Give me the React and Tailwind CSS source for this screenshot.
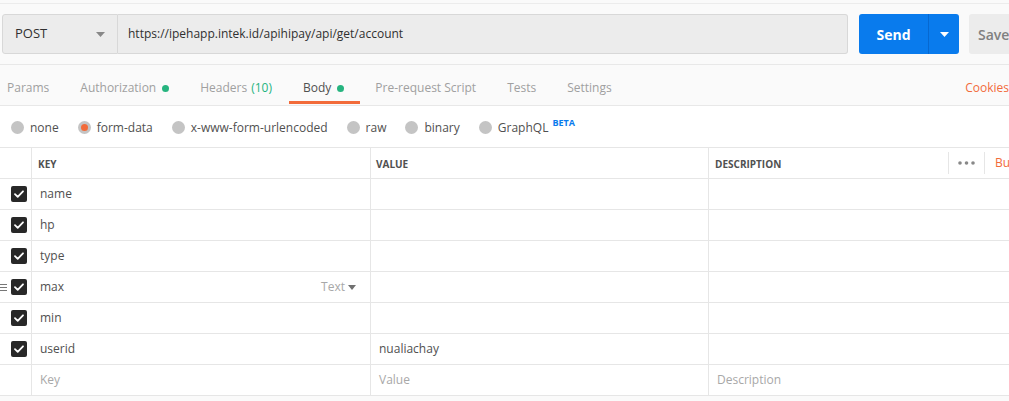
import React from 'react';

const tabs = [
  { label: 'Params' },
  { label: 'Authorization', dot: true },
  { label: 'Headers', count: '(10)' },
  { label: 'Body', dot: true, active: true },
  { label: 'Pre-request Script' },
  { label: 'Tests' },
  { label: 'Settings' },
];

const bodyTypes = ['none', 'form-data', 'x-www-form-urlencoded', 'raw', 'binary', 'GraphQL'];

const rows = [
  { key: 'name' },
  { key: 'hp' },
  { key: 'type' },
  { key: 'max', hover: true },
  { key: 'min' },
  { key: 'userid', value: 'nualiachay' },
];

function Check() {
  return (
    <span className="flex h-4 w-4 items-center justify-center rounded-[2px] bg-[#282828]">
      <svg width="10" height="8" viewBox="0 0 10 8" fill="none">
        <path d="M1 4.2 3.7 6.8 9 1.3" stroke="#fff" strokeWidth="1.8" strokeLinecap="round" strokeLinejoin="round" />
      </svg>
    </span>
  );
}

export default function App() {
  return (
    <div
      className="h-[401px] w-[1009px] overflow-hidden bg-[#fafafa] text-[12px] text-[#505050]"
      style={{ fontFamily: '"Open Sans", "Liberation Sans", sans-serif' }}
    >
      {/* request bar */}
      <div className="mt-[3px] border-t border-[#ececec] pb-[10px] pt-[10px]">
        <div className="flex h-[40px] items-stretch overflow-hidden pl-[2px]">
          <div className="flex w-[116px] shrink-0 items-center justify-between rounded-l-[3px] border border-[#d8d8d8] bg-[#ececec] pl-[12px] pr-[12px] text-[13px] text-[#303030]">
            <span>POST</span>
            <svg width="9" height="5" viewBox="0 0 9 5"><path d="M0 0h9L4.5 5z" fill="#888" /></svg>
          </div>
          <div className="flex w-[730px] shrink-0 items-center rounded-r-[3px] border border-l-0 border-[#d8d8d8] bg-[#ececec] pl-[10px] text-[12px] text-[#303030]">
            https://ipehapp.intek.id/apihipay/api/get/account
          </div>
          <div className="ml-[11px] flex w-[100px] shrink-0 overflow-hidden rounded-[3px] bg-[#097bed] text-white">
            <div className="flex w-[69px] items-center justify-center text-[14px] font-bold">Send</div>
            <div className="flex flex-1 items-center justify-center border-l border-[#0668d0]">
              <svg width="9" height="5" viewBox="0 0 9 5"><path d="M0 0h9L4.5 5z" fill="#fff" /></svg>
            </div>
          </div>
          <div className="ml-[10px] flex w-[60px] shrink-0 items-center rounded-[3px] bg-[#ececec] pl-[9px] text-[14px] font-semibold text-[#808080]">
            Save
          </div>
        </div>
      </div>

      {/* tabs */}
      <div className="flex h-[42px] items-stretch border-y border-[#e8e8e8] pl-[7px] pt-[6px]">
        {tabs.map((t) => (
          <div key={t.label} className={`relative mr-[31px] flex items-center ${t.active ? 'text-[#505050]' : 'text-[#a0a0a0]'}`}>
            <span>{t.label}</span>
            {t.count && <span className="ml-[4px] text-[#26b47f]">{t.count}</span>}
            {t.dot && <span className="ml-[6px] h-[7px] w-[7px] rounded-full bg-[#26b47f]" />}
            {t.active && <span className="absolute bottom-[1px] left-[-14px] right-[-16px] h-[3px] bg-[#f26b3a]" />}
          </div>
        ))}
        <div className="ml-auto flex items-center text-[#f26b3a]">Cookies</div>
      </div>

      {/* body type radios */}
      <div className="flex h-[41px] items-center bg-white pl-[11px] pt-[2px]">
        {bodyTypes.map((b) => (
          <div key={b} className="mr-[19px] flex items-center">
            <span className="flex h-[13px] w-[13px] items-center justify-center rounded-full bg-[#c4c4c4]">
              {b === 'form-data' && <span className="h-[7px] w-[7px] rounded-full bg-[#f26b3a]" />}
            </span>
            <span className="ml-[6px]">{b}</span>
            {b === 'GraphQL' && <span className="-mt-[9px] ml-[4px] text-[9px] font-bold text-[#097bed]">BETA</span>}
          </div>
        ))}
      </div>

      {/* table */}
      <div className="border-t border-[#e6e6e6] bg-white">
        <div className="flex h-[31px] border-b border-[#e6e6e6] text-[10px] font-bold text-[#505050]">
          <div className="w-[32px] border-r border-[#e6e6e6]" />
          <div className="flex w-[339px] items-center border-r border-[#e6e6e6] pl-[6px] pt-[2px]">KEY</div>
          <div className="flex w-[338px] items-center border-r border-[#e6e6e6] pl-[5px] pt-[2px]">VALUE</div>
          <div className="flex flex-1 items-center pl-[6px]">
            <span className="pt-[2px]">DESCRIPTION</span>
            <span className="ml-auto flex h-[22px] items-center border-x border-[#e6e6e6] px-[9px]">
              <svg width="17" height="4" viewBox="0 0 17 4">
                <circle cx="2" cy="2" r="1.8" fill="#888" />
                <circle cx="8.5" cy="2" r="1.8" fill="#888" />
                <circle cx="15" cy="2" r="1.8" fill="#888" />
              </svg>
            </span>
            <span className="ml-[10px] w-[14px] overflow-hidden whitespace-nowrap text-[12px] font-normal text-[#f26b3a]">Bulk Edit</span>
          </div>
        </div>
        {rows.map((r) => (
          <div key={r.key} className="flex h-[31px] border-b border-[#e6e6e6]">
            <div className="relative flex w-[32px] items-center justify-end border-r border-[#e6e6e6] pr-[4px]">
              {r.hover && (
                <svg className="absolute left-0 top-[12px]" width="7" height="7" viewBox="0 0 7 7">
                  <path d="M0 .5h7M0 3.5h7M0 6.5h7" stroke="#777" strokeWidth="1" />
                </svg>
              )}
              <Check />
            </div>
            <div className="flex w-[339px] items-center border-r border-[#e6e6e6] pl-[8px] pr-[14px]">
              <span>{r.key}</span>
              {r.hover && (
                <span className="ml-auto flex items-center text-[#a8a8a8]">
                  Text
                  <svg className="ml-[3px]" width="8" height="5" viewBox="0 0 8 5"><path d="M0 0h8L4 5z" fill="#707070" /></svg>
                </span>
              )}
            </div>
            <div className="flex w-[338px] items-center border-r border-[#e6e6e6] pl-[8px]">{r.value}</div>
            <div className="flex-1" />
          </div>
        ))}
        <div className="flex h-[31px] border-b border-[#e6e6e6] text-[#a8a8a8]">
          <div className="w-[32px] border-r border-[#e6e6e6]" />
          <div className="flex w-[339px] items-center border-r border-[#e6e6e6] pl-[8px]">Key</div>
          <div className="flex w-[338px] items-center border-r border-[#e6e6e6] pl-[8px]">Value</div>
          <div className="flex flex-1 items-center pl-[8px]">Description</div>
        </div>
      </div>
    </div>
  );
}
